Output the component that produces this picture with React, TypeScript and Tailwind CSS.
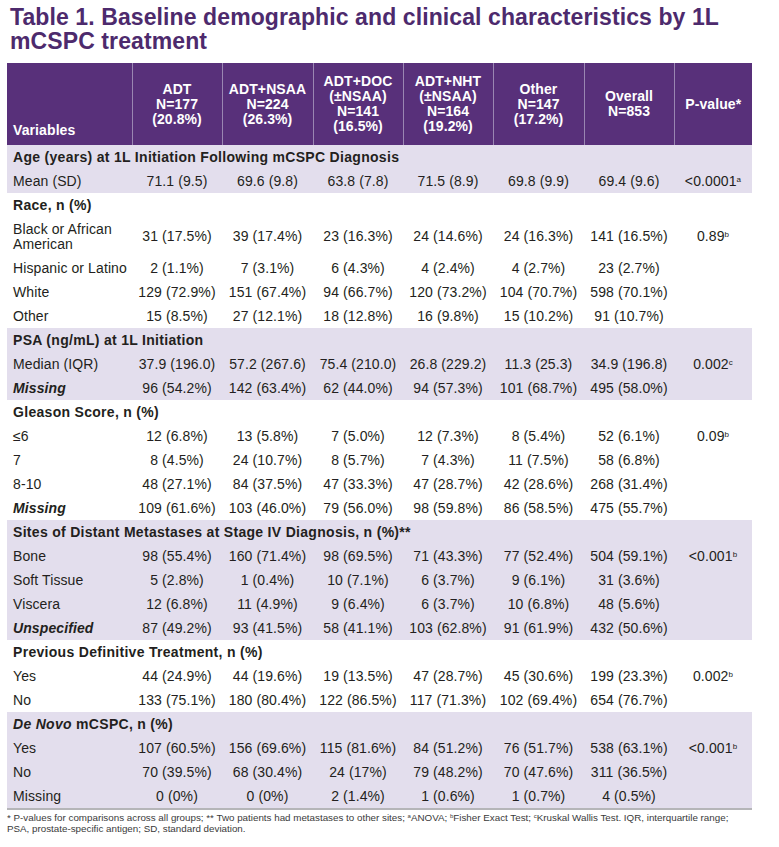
import React from 'react';

type Row = {
  label: React.ReactNode;
  values: string[];
  p?: [string, string];
  tall?: boolean;
};

type Section = {
  title: React.ReactNode;
  shaded: boolean;
  rows: Row[];
};

const sections: Section[] = [
  {
    title: 'Age (years) at 1L Initiation Following mCSPC Diagnosis',
    shaded: true,
    rows: [
      {
        label: 'Mean (SD)',
        values: ['71.1 (9.5)', '69.6 (9.8)', '63.8 (7.8)', '71.5 (8.9)', '69.8 (9.9)', '69.4 (9.6)'],
        p: ['<0.0001', 'a'],
      },
    ],
  },
  {
    title: 'Race, n (%)',
    shaded: false,
    rows: [
      {
        label: 'Black or African American',
        values: ['31 (17.5%)', '39 (17.4%)', '23 (16.3%)', '24 (14.6%)', '24 (16.3%)', '141 (16.5%)'],
        p: ['0.89', 'b'],
        tall: true,
      },
      { label: 'Hispanic or Latino', values: ['2 (1.1%)', '7 (3.1%)', '6 (4.3%)', '4 (2.4%)', '4 (2.7%)', '23 (2.7%)'] },
      { label: 'White', values: ['129 (72.9%)', '151 (67.4%)', '94 (66.7%)', '120 (73.2%)', '104 (70.7%)', '598 (70.1%)'] },
      { label: 'Other', values: ['15 (8.5%)', '27 (12.1%)', '18 (12.8%)', '16 (9.8%)', '15 (10.2%)', '91 (10.7%)'] },
    ],
  },
  {
    title: 'PSA (ng/mL) at 1L Initiation',
    shaded: true,
    rows: [
      {
        label: 'Median (IQR)',
        values: ['37.9 (196.0)', '57.2 (267.6)', '75.4 (210.0)', '26.8 (229.2)', '11.3 (25.3)', '34.9 (196.8)'],
        p: ['0.002', 'c'],
      },
      {
        label: <span className="font-bold italic">Missing</span>,
        values: ['96 (54.2%)', '142 (63.4%)', '62 (44.0%)', '94 (57.3%)', '101 (68.7%)', '495 (58.0%)'],
      },
    ],
  },
  {
    title: 'Gleason Score, n (%)',
    shaded: false,
    rows: [
      {
        label: '≤6',
        values: ['12 (6.8%)', '13 (5.8%)', '7 (5.0%)', '12 (7.3%)', '8 (5.4%)', '52 (6.1%)'],
        p: ['0.09', 'b'],
      },
      { label: '7', values: ['8 (4.5%)', '24 (10.7%)', '8 (5.7%)', '7 (4.3%)', '11 (7.5%)', '58 (6.8%)'] },
      { label: '8-10', values: ['48 (27.1%)', '84 (37.5%)', '47 (33.3%)', '47 (28.7%)', '42 (28.6%)', '268 (31.4%)'] },
      {
        label: <span className="font-bold italic">Missing</span>,
        values: ['109 (61.6%)', '103 (46.0%)', '79 (56.0%)', '98 (59.8%)', '86 (58.5%)', '475 (55.7%)'],
      },
    ],
  },
  {
    title: 'Sites of Distant Metastases at Stage IV Diagnosis, n (%)**',
    shaded: true,
    rows: [
      {
        label: 'Bone',
        values: ['98 (55.4%)', '160 (71.4%)', '98 (69.5%)', '71 (43.3%)', '77 (52.4%)', '504 (59.1%)'],
        p: ['<0.001', 'b'],
      },
      { label: 'Soft Tissue', values: ['5 (2.8%)', '1 (0.4%)', '10 (7.1%)', '6 (3.7%)', '9 (6.1%)', '31 (3.6%)'] },
      { label: 'Viscera', values: ['12 (6.8%)', '11 (4.9%)', '9 (6.4%)', '6 (3.7%)', '10 (6.8%)', '48 (5.6%)'] },
      {
        label: <span className="font-bold italic">Unspecified</span>,
        values: ['87 (49.2%)', '93 (41.5%)', '58 (41.1%)', '103 (62.8%)', '91 (61.9%)', '432 (50.6%)'],
      },
    ],
  },
  {
    title: 'Previous Definitive Treatment, n (%)',
    shaded: false,
    rows: [
      {
        label: 'Yes',
        values: ['44 (24.9%)', '44 (19.6%)', '19 (13.5%)', '47 (28.7%)', '45 (30.6%)', '199 (23.3%)'],
        p: ['0.002', 'b'],
      },
      { label: 'No', values: ['133 (75.1%)', '180 (80.4%)', '122 (86.5%)', '117 (71.3%)', '102 (69.4%)', '654 (76.7%)'] },
    ],
  },
  {
    title: (
      <>
        <span className="italic">De Novo</span> mCSPC, n (%)
      </>
    ),
    shaded: true,
    rows: [
      {
        label: 'Yes',
        values: ['107 (60.5%)', '156 (69.6%)', '115 (81.6%)', '84 (51.2%)', '76 (51.7%)', '538 (63.1%)'],
        p: ['<0.001', 'b'],
      },
      { label: 'No', values: ['70 (39.5%)', '68 (30.4%)', '24 (17%)', '79 (48.2%)', '70 (47.6%)', '311 (36.5%)'] },
      { label: 'Missing', values: ['0 (0%)', '0 (0%)', '2 (1.4%)', '1 (0.6%)', '1 (0.7%)', '4 (0.5%)'] },
    ],
  },
];

const headers = [
  ['ADT', 'N=177', '(20.8%)'],
  ['ADT+NSAA', 'N=224', '(26.3%)'],
  ['ADT+DOC', '(±NSAA)', 'N=141', '(16.5%)'],
  ['ADT+NHT', '(±NSAA)', 'N=164', '(19.2%)'],
  ['Other', 'N=147', '(17.2%)'],
  ['Overall', 'N=853'],
];

function App() {
  return (
    <div className="min-h-screen bg-white px-[7px] pt-[5px] font-['Liberation_Sans',Arial,sans-serif] text-[#231f20]">
      <h1 className="pl-[3px] text-[23px] font-bold leading-[24px] tracking-[0.1px] text-[#4d2a6d]">
        Table 1. Baseline demographic and clinical characteristics by 1L
        <br />
        mCSPC treatment
      </h1>

      <table className="mt-[10px] w-[745px] table-fixed border-collapse text-[14px] leading-[15px] tracking-[0.1px]">
        <colgroup>
          <col className="w-[125px]" />
          <col className="w-[90px]" />
          <col className="w-[91px]" />
          <col className="w-[90px]" />
          <col className="w-[90px]" />
          <col className="w-[91px]" />
          <col className="w-[90px]" />
          <col className="w-[78px]" />
        </colgroup>
        <thead>
          <tr className="h-[82px] bg-[#58307a] font-bold text-white">
            <th className="border-r border-[#9a86b2] px-[6px] pb-[7px] text-left align-bottom">Variables</th>
            {headers.map((lines, i) => (
              <th key={i} className="border-r border-[#9a86b2] px-1 text-center align-middle">
                {lines.map((l) => (
                  <div key={l}>{l}</div>
                ))}
              </th>
            ))}
            <th className="px-1 text-center align-middle">P-value*</th>
          </tr>
        </thead>
        {sections.map((s, si) => (
          <tbody key={si} className={s.shaded ? 'bg-[#e3deed]' : 'bg-white'}>
            <tr className="h-[24px]">
              <td colSpan={8} className="whitespace-nowrap px-[6px] font-bold tracking-[0.3px]">
                {s.title}
              </td>
            </tr>
            {s.rows.map((r, ri) => (
              <tr key={ri} className={r.tall ? 'h-[39px]' : 'h-[24px]'}>
                <td className={r.tall ? 'pl-[6px] align-middle' : 'whitespace-nowrap pl-[6px] align-middle'}>
                  {r.label}
                </td>
                {r.values.map((v, vi) => (
                  <td key={vi} className="whitespace-nowrap text-center align-middle">
                    {v}
                  </td>
                ))}
                <td className="whitespace-nowrap text-center align-middle">
                  {r.p && (
                    <>
                      {r.p[0]}
                      <sup className="text-[8px]">{r.p[1]}</sup>
                    </>
                  )}
                </td>
              </tr>
            ))}
          </tbody>
        ))}
      </table>
      <div className="w-[745px] border-t-2 border-[#b5b5b8]" />

      <p className="mt-[3px] text-[9.8px] leading-[10.5px] text-[#3a3a3a]">
        * P-values for comparisons across all groups; ** Two patients had metastases to other sites;{' '}
        <sup className="text-[6px]">a</sup>ANOVA; <sup className="text-[6px]">b</sup>Fisher Exact Test;{' '}
        <sup className="text-[6px]">c</sup>Kruskal Wallis Test. IQR, interquartile range;
        <br />
        PSA, prostate-specific antigen; SD, standard deviation.
      </p>
    </div>
  );
}

export default App;
